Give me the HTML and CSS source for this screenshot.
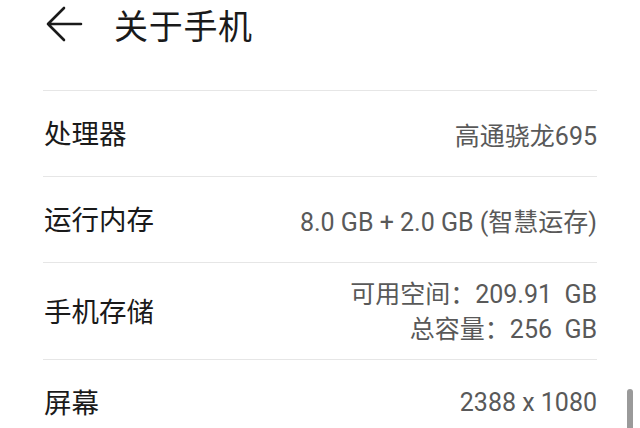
FILE: index.html
```html
<!DOCTYPE html>
<html lang="zh-CN">
<head>
<meta charset="utf-8">
<link rel="stylesheet" href="styles.css">
</head>
<body>
<div class="screen">
  <header class="topbar">
    <svg class="back" width="38" height="36" viewBox="0 0 38 36">
      <path d="M36 18 H3 M19 2 L3 18 L19 34" fill="none" stroke="#1a1a1a" stroke-width="2.6" stroke-linecap="round" stroke-linejoin="round"/>
    </svg>
    <h1 class="title">关于手机</h1>
  </header>
  <ul class="list">
    <li class="row">
      <span class="label">处理器</span>
      <span class="value">高通骁龙695</span>
    </li>
    <li class="row">
      <span class="label">运行内存</span>
      <span class="value">8.0 GB + 2.0 GB (智慧运存)</span>
    </li>
    <li class="row row-tall">
      <span class="label">手机存储</span>
      <span class="value multi">
        <span class="line">可用空间：209.91  GB</span>
        <span class="line">总容量：256  GB</span>
      </span>
    </li>
    <li class="row">
      <span class="label">屏幕</span>
      <span class="value">2388 x 1080</span>
    </li>
  </ul>
  <div class="scrollbar"></div>
</div>
</body>
</html>
```
FILE: styles.css
```css
* { box-sizing: border-box; }
html, body {
  margin: 0;
  padding: 0;
  background: #ffffff;
  overflow: hidden;
}
body {
  font-family: "Roboto", "Noto Sans CJK SC", sans-serif;
  width: 640px;
  height: 428px;
}
.screen {
  position: relative;
  width: 640px;
  height: 428px;
  overflow: hidden;
}
.topbar {
  height: 90px;
  display: flex;
  align-items: flex-start;
  padding: 0 0 0 45px;
}
.back {
  display: block;
  margin-top: 6px;
}
.title {
  margin: 0 0 0 31px;
  font-family: "Noto Sans CJK SC", sans-serif;
  font-weight: 400;
  font-size: 34px;
  line-height: 49px;
  color: #1a1a1a;
  letter-spacing: 0.7px;
}
.list {
  list-style: none;
  margin: 0 43px 0 43px;
  padding: 0;
}
.row {
  height: 86px;
  border-top: 1.5px solid #e6e6e6;
  display: flex;
  align-items: center;
  justify-content: space-between;
}
.row-tall {
  height: 97px;
}
.label {
  font-family: "Noto Sans CJK SC", sans-serif;
  font-size: 27.5px;
  color: #1a1a1a;
  padding-left: 1px;
  margin-bottom: 3px;
}
.value {
  font-size: 25px;
  color: #595959;
  text-align: right;
  white-space: pre;
}
.multi {
  display: flex;
  flex-direction: column;
  align-items: flex-end;
  margin-top: 2px;
}
.line {
  line-height: 35px;
}
.scrollbar {
  position: absolute;
  left: 627px;
  top: 389px;
  width: 6px;
  height: 60px;
  border-radius: 3px;
  background: #9a9a9a;
}
```
